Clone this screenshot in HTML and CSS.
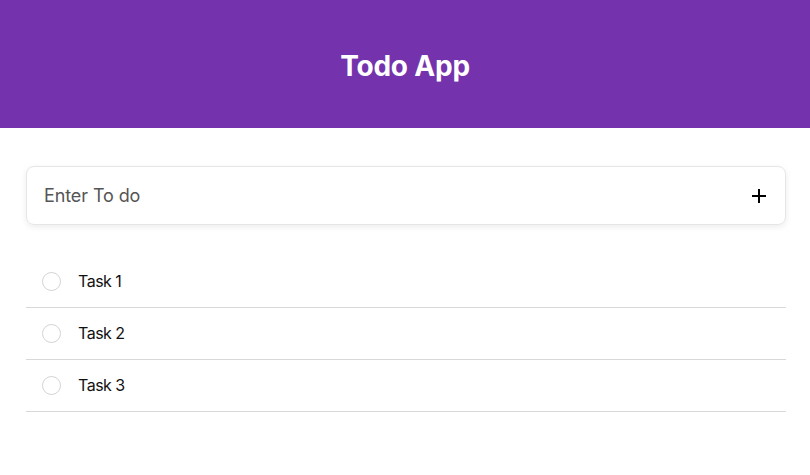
FILE: index.html
```html
<!DOCTYPE html>
<html>
<head>
<meta charset="utf-8">
<link rel="stylesheet" href="styles.css">
</head>
<body>
<header class="header"><h1 class="title">Todo App</h1></header>
<main class="content">
  <form class="add-form">
    <input class="add-input" type="text" placeholder="Enter To do">
    <button class="add-btn" type="button" aria-label="Add">
      <svg width="16" height="16" viewBox="0 0 16 16"><path d="M8 1v14M1 8h14" stroke="#000" stroke-width="2"/></svg>
    </button>
  </form>
  <ul class="list">
    <li class="item"><span class="check"></span><span class="label">Task 1</span></li>
    <li class="item"><span class="check"></span><span class="label">Task 2</span></li>
    <li class="item"><span class="check"></span><span class="label">Task 3</span></li>
  </ul>
</main>
</body>
</html>
```
FILE: styles.css
```css
* { box-sizing: border-box; }
body { margin: 0; font-family: Inter, "Noto Sans", sans-serif; background: #fff; }
.header { background: #7432ad; height: 128px; display: flex; align-items: center; justify-content: center; padding-top: 3px; }
.title { margin: 0; color: #fff; font-size: 28px; font-weight: 700; line-height: 1; letter-spacing: -0.2px; }
.content { padding: 38px 24px 0 26px; }
.add-form { display: flex; align-items: center; height: 59px; border: 1px solid #e6e6e6; border-radius: 8px; box-shadow: 0 2px 6px rgba(0,0,0,0.08); padding: 0 18px 0 17px; }
.add-input { flex: 1; border: none; outline: none; font-family: inherit; font-size: 18px; color: #333; background: transparent; padding: 0; letter-spacing: -0.1px; }
.add-input::placeholder { color: #555; }
.add-btn { border: none; background: none; padding: 0; display: flex; cursor: pointer; }
.list { list-style: none; margin: 31px 0 0; padding: 0; }
.item { display: flex; align-items: center; height: 52px; border-bottom: 1px solid #d8d8d8; padding-left: 16px; padding-bottom: 1px; }
.check { width: 19px; height: 19px; border: 1px solid #d4d4d4; border-radius: 50%; margin-right: 17px; }
.label { font-size: 16px; color: #111; letter-spacing: -0.5px; }
```
